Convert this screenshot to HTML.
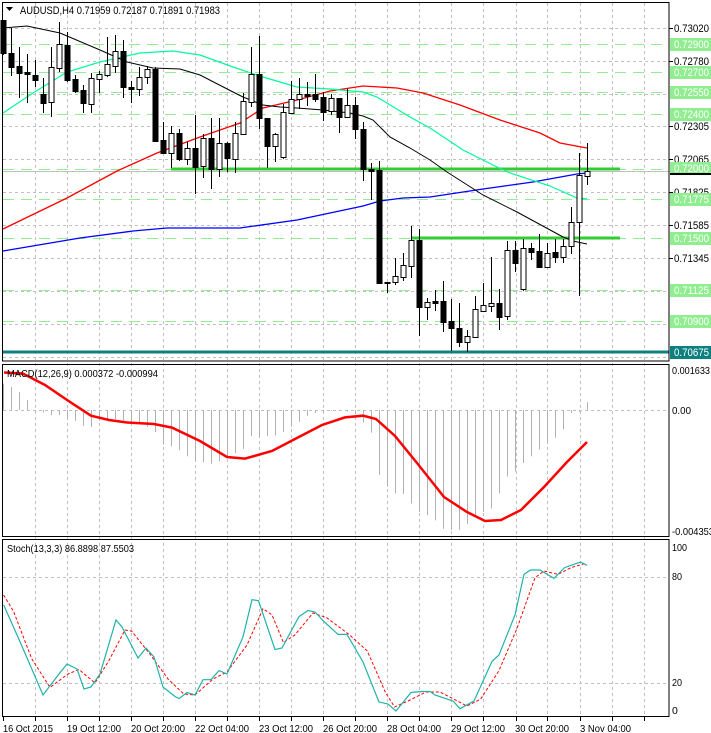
<!DOCTYPE html>
<html><head><meta charset="utf-8"><style>
html,body{margin:0;padding:0;background:#fff;}
svg{display:block;font-family:"Liberation Sans",sans-serif;}
</style></head><body>
<svg id="c" width="711" height="733" xmlns="http://www.w3.org/2000/svg">
<rect width="711" height="733" fill="#fff"/>
<g id="grid" stroke="#c0c0c0" stroke-dasharray="3,3" stroke-width="1"></g>
<g id="green" stroke="#90ee90" stroke-dasharray="11,7" stroke-width="1"></g>
<line x1="2" y1="171.5" x2="669" y2="171.5" stroke="#c0c0c0"/>
<line x1="2" y1="352" x2="669" y2="352" stroke="#0e8080" stroke-width="3"/>
<line x1="171" y1="169" x2="620" y2="169" stroke="#32cd32" stroke-width="3"/>
<line x1="411" y1="238" x2="620" y2="238" stroke="#32cd32" stroke-width="3"/>
<polyline fill="none" stroke="#0000ff" stroke-width="1.3" points="3,251 80,238 133,231 167,228 240,228 297,220 330,213 363,206 380,201 403,198 430,197 483,189 533,182 577,174 587,173"/>
<polyline fill="none" stroke="#ff0000" stroke-width="1.3" points="3,229 67,198 117,171 157,153 200,137 240,123 263,108 297,100 330,91 363,86 397,88 423,93 460,105 500,120 540,133 560,143 587,148"/>
<polyline fill="none" stroke="#00fa9a" stroke-width="1.2" points="3,113 33,93 67,72 100,62 140,53 173,51 200,55 233,67 263,77 297,87 330,89 363,92 377,97 410,117 430,128 463,150 497,167 510,173 550,186 577,198 587,199"/>
<polyline fill="none" stroke="#000" stroke-width="1" points="3,28 27,26 60,33 100,50 127,62 153,68 180,69 200,75 233,92 243,97 263,105 280,107 297,108 323,110 350,113 363,116 373,120 390,137 410,148 430,160 447,172 483,195 517,212 563,237 573,241 587,244"/>
<g id="candles"></g>
<g id="hist" stroke="#b0b0b0" stroke-width="1"></g>
<polyline fill="none" stroke="#ff0000" stroke-width="2.5" points="4,372.5 23,373.6 45,385 68,400.6 91,415.7 109,420 127,422.5 154,424 172,427.6 200,441 227,457 245,458.6 272,451 295,439 322,425 345,417.4 363,415.7 376,419 395,436 417,463 444,497 467,512 485,521 501,520 521,510 544,487 567,462 587,442"/>
<polyline fill="none" stroke="#ff0000" stroke-width="1" stroke-dasharray="3,2" points="3.6,595 13.6,611.5 31.7,658.7 50,687.4 68,674 79,669.5 95,683 109,660.4 125,630 131.5,631 149.7,653.7 168,679 183.7,694 195,695 213,679 227,672 247,645 263,608.8 272,614.9 283.4,642.5 294.8,635 313,613 326.5,617.6 349,634.4 367.3,651 385.5,692.5 394.6,707 408,701 426,692 440,692 453.5,699 467,706 480.7,699 499,670.6 517,628.4 535,577.7 544,571 558,574.4 571,567.6 585,563.6"/>
<polyline fill="none" stroke="#20b2aa" stroke-width="1.2" points="3.6,604.7 23,648.6 43,695 59,674 67,664 77,669 84,689 91,687 100,674 116,620 122,627 138,658 146,648 154,657 163,687 175,696.5 179,698.6 187,692.5 195,695 203,679.7 211,679.7 219,670.6 227,674 243,636.8 252,599.7 258.5,600.7 275,649.6 282,648 299,616.6 308,610.5 315,612 324,621.6 338,634.4 347,634.4 363,662 379,702 388,704 396,711 411,692.5 422,691.5 430,691.5 435,695 453,701 460,708.7 474,701 492,661.4 499,655 515,614.9 524,574.4 530.6,570 540,570 554,578.4 564.6,567.6 580.5,562 587,565.3"/>
<g fill="none" stroke="#000" stroke-width="1">
<rect x="2.5" y="2.5" width="666.5" height="358.5"/>
<rect x="2.5" y="364.5" width="666.5" height="172"/>
<rect x="2.5" y="539.5" width="666.5" height="177"/>
</g>
<g id="ticks" stroke="#000"></g>
<g id="labels" font-size="11" fill="#000"></g>
<path d="M6 7 L13 7 L9.5 11 Z" fill="#000"/>
<text x="20" y="14" font-size="11" textLength="200" lengthAdjust="spacingAndGlyphs">AUDUSD,H4  0.71959 0.72187 0.71891 0.71983</text>
<text x="7" y="377" font-size="10.5" textLength="151" lengthAdjust="spacingAndGlyphs">MACD(12,26,9) 0.000372 -0.000994</text>
<text x="7" y="552" font-size="10.5" textLength="127" lengthAdjust="spacingAndGlyphs">Stoch(13,3,3) 86.8898 87.5503</text>
<g font-size="10.5">
<text x="672" y="374" textLength="38" lengthAdjust="spacingAndGlyphs">0.001633</text>
<text x="672" y="414" textLength="19" lengthAdjust="spacingAndGlyphs">0.00</text>
<text x="672" y="535" textLength="42" lengthAdjust="spacingAndGlyphs">-0.004353</text>
<text x="672" y="551" textLength="15" lengthAdjust="spacingAndGlyphs">100</text>
<text x="672" y="580" textLength="10" lengthAdjust="spacingAndGlyphs">80</text>
<text x="672" y="686" textLength="10" lengthAdjust="spacingAndGlyphs">20</text>
<text x="672" y="714">0</text>
<g id="dates"></g>
</g>
</svg>
<script>
var NS="http://www.w3.org/2000/svg";
function el(p,t,a){var e=document.createElementNS(NS,t);for(var k in a)e.setAttribute(k,a[k]);p.appendChild(e);return e;}
var g=document.getElementById('grid');
var vx=[35,67,99,131,163,195,227,259,291,323,355,387,419,451,483,516,547,580,612,644];
vx.forEach(function(x){el(g,'line',{x1:x+.5,y1:3,x2:x+.5,y2:716});});
[28,61,94,126,159,192,225,258,291,324,357].forEach(function(y){el(g,'line',{x1:3,y1:y+.5,x2:668,y2:y+.5});});
[410,577,683].forEach(function(y){el(g,'line',{x1:3,y1:y+.5,x2:668,y2:y+.5});});
var gr=document.getElementById('green');
[44,72,92,114,169,199,238,290,321].forEach(function(y){el(gr,'line',{x1:3,y1:y+.5,x2:668,y2:y+.5});});
var C=[[20,53,20,55,0],[53,67,28,76,0],[66,73,47,98,0],[72,74,54,103,0],[75,80,60,87,0],[94,103,78,113,0],[67,102,47,117,1],[44,68,22,72,1],[45,80,32,82,0],[79,91,75,93,0],[90,103,85,113,0],[78,104,73,113,1],[74,79,71,93,1],[64,75,37,77,1],[51,66,35,73,1],[51,87,40,98,0],[87,89,81,103,0],[77,89,67,96,1],[69,77,66,84,1],[69,141,67,141,0],[140,153,122,153,0],[133,153,126,168,1],[133,159,129,161,0],[148,159,142,165,1],[148,167,115,194,0],[138,166,134,178,1],[138,169,118,189,0],[143,169,118,177,1],[143,158,142,172,0],[133,159,122,173,1],[101,134,93,135,1],[74,102,47,107,1],[74,118,36,129,0],[118,146,118,168,0],[134,146,133,162,1],[112,157,104,159,1],[99,113,81,113,1],[94,99,78,109,1],[94,96,82,106,0],[94,99,74,102,0],[97,112,92,121,0],[98,111,94,115,1],[98,117,98,133,0],[105,117,89,117,1],[105,129,97,139,0],[129,169,122,181,0],[169,171,163,200,0],[170,283,161,283,0],[282,283,282,293,0],[276,282,258,285,1],[265,277,253,281,1],[240,266,226,278,1],[240,307,229,336,0],[302,307,298,320,1],[301,303,290,311,0],[301,322,281,332,0],[321,328,299,351,0],[328,342,303,347,0],[336,342,330,352,1],[309,337,296,338,1],[305,311,283,312,1],[303,306,257,312,1],[303,317,289,330,0],[250,316,241,320,1],[250,263,241,272,0],[248,289,239,291,1],[248,252,243,260,0],[251,267,234,268,0],[253,267,243,268,1],[252,257,239,263,0],[246,257,239,263,1],[222,246,207,254,1],[175,222,153,296,1],[171,176,143,185,1]];
var cg=document.getElementById('candles');
C.forEach(function(c,i){var x=3+8*i;
el(cg,'line',{x1:x+.5,y1:c[2],x2:x+.5,y2:c[3],stroke:'#000'});
var h=Math.max(c[1]-c[0],1);
el(cg,'rect',{x:x-2,y:c[0]+.5,width:5,height:h,fill:c[4]?'#fff':'#000',stroke:'#000','stroke-width':1});});
var H=[85,95,110,133,165,170,178,178,190,195,210,213,195,192,190,195,198,205,213,228,265,270,282,300,315,318,322,315,305,290,278,240,245,240,238,228,212,198,180,172,168,165,165,168,175,200,230,355,390,410,412,440,465,475,490,515,518,518,500,480,465,455,410,360,345,320,300,280,262,245,220,172,168,140];
var hg=document.getElementById('hist');
H.forEach(function(z,i){var x=3+8*i+.5;var y=355+z/2.963;el(hg,'line',{x1:x,y1:410,x2:x,y2:y});});
var lb=document.getElementById('labels');var tk=document.getElementById('ticks');
var P=[[28,'0.73020',0],[44,'0.72900',1],[61,'0.72780',0],[72,'0.72700',1],[92,'0.72550',1],[114,'0.72400',1],[126,'0.72305',0],[159,'0.72065',0],[192,'0.71825',0],[225,'0.71585',0],[258,'0.71345',0],[168,'0.72000',1],[199,'0.71775',1],[238,'0.71500',1],[290,'0.71125',1],[321,'0.70900',1],[352,'0.70675',2]];
P.forEach(function(p){
if(p[2]==0){el(tk,'line',{x1:669,y1:p[0]+.5,x2:673,y2:p[0]+.5});}
if(p[2]){el(lb,'rect',{x:670,y:p[0]-6,width:41,height:13,fill:p[2]==2?'#0e8080':'#90ee90'});}
var t=el(lb,'text',{x:674,y:p[0]+4,fill:p[2]?'#fff':'#000',textLength:35,lengthAdjust:'spacingAndGlyphs'});t.textContent=p[1];});
el(lb,'rect',{x:670,y:173,width:41,height:2,fill:'#000'});
vx.concat([3]).forEach(function(x){el(tk,'line',{x1:x+.5,y1:717,x2:x+.5,y2:721});});
var D=[[3,'16 Oct 2015',50],[67,'19 Oct 12:00',54],[131,'20 Oct 20:00',54],[195,'22 Oct 04:00',54],[259,'23 Oct 12:00',54],[323,'26 Oct 20:00',54],[387,'28 Oct 04:00',54],[451,'29 Oct 12:00',54],[515,'30 Oct 20:00',54],[580,'3 Nov 04:00',51]];
var dg=document.getElementById('dates');
D.forEach(function(d){var t=el(dg,'text',{x:d[0],y:732,textLength:d[2],lengthAdjust:'spacingAndGlyphs'});t.textContent=d[1];});
</script>
</body></html>
